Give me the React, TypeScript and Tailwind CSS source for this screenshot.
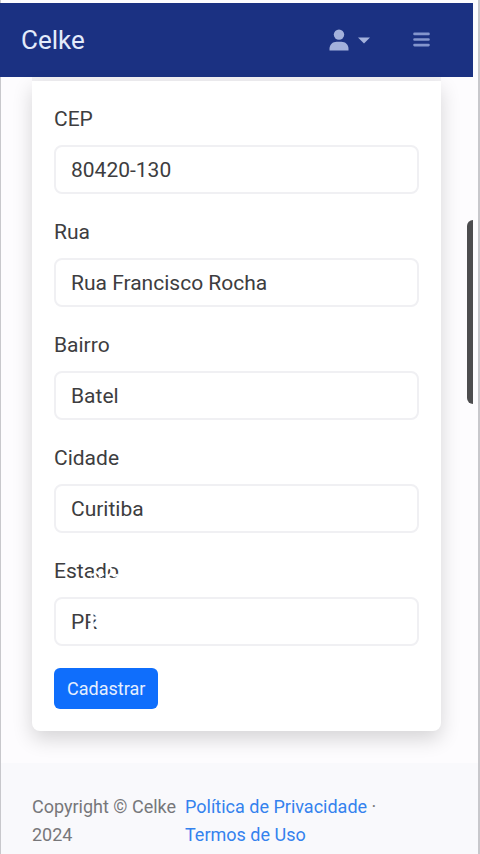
import { ReactNode } from "react";

type Field = {
  id: string;
  label: string;
  value: string;
  labelMark?: ReactNode;
  inputMark?: ReactNode;
};

const fields: Field[] = [
  { id: "cep", label: "CEP", value: "80420-130" },
  { id: "rua", label: "Rua", value: "Rua Francisco Rocha" },
  { id: "bairro", label: "Bairro", value: "Batel" },
  { id: "cidade", label: "Cidade", value: "Curitiba" },
  {
    id: "estado",
    label: "Estado",
    value: "PR",
    labelMark: (
      <svg viewBox="0 0 30 24" className="absolute left-9 top-1 h-6 w-[30px]" fill="none" stroke="#fff" strokeWidth="2.4" aria-hidden="true">
        <path d="M0 17l4-2M5 12l7 5M9 18l5-3M17 18l5-4M19 8l4 4M23 17l5-1" />
      </svg>
    ),
    inputMark: (
      <svg viewBox="0 0 16 22" className="absolute left-9 top-[14px] h-[22px] w-4" fill="none" stroke="#fff" strokeWidth="3" aria-hidden="true">
        <path d="M2 1v20M1 7h12M1 14h12" />
      </svg>
    ),
  },
];

const Header = () => {
  return (
    <header className="flex h-[74px] items-center bg-[#1b3182] pl-[21px] pr-[43px]">
      <a href="#" className="text-[26px] leading-8 text-[#e3ebfb]">
        Celke
      </a>
      <button type="button" aria-label="Usuário" className="ml-auto flex items-center gap-[9px] text-[#a3b1dc]">
        <svg viewBox="0 0 20 22" className="h-[22px] w-5" fill="currentColor" aria-hidden="true">
          <circle cx="10" cy="5.6" r="5.2" />
          <path d="M.5 21.500v-1.800c0-4.200 3.200-7 7.200-7h4.600c4 0 7.200 2.800 7.200 7v1.800z" />
        </svg>
        <svg viewBox="0 0 12 7" className="h-[7px] w-3" fill="currentColor" aria-hidden="true">
          <path d="M0 .5h12L6 6.500z" />
        </svg>
      </button>
      <button type="button" aria-label="Menu" className="ml-[43px] text-[#8495cd]">
        <svg viewBox="0 0 17 16" className="h-4 w-[17px]" stroke="currentColor" strokeWidth="2.6" strokeLinecap="round" aria-hidden="true">
          <path d="M1.500 1.900h14M1.500 7.500h14M1.500 13.100h14" />
        </svg>
      </button>
    </header>
  );
};

const FormField = ({ id, label, value, labelMark, inputMark }: Field) => {
  return (
    <div className="mb-[22px]">
      <label htmlFor={id} className="relative mb-[10px] block text-[21px] leading-8">
        {label}
        {labelMark}
      </label>
      <div className="relative">
        <input
          id={id}
          type="text"
          defaultValue={value}
          className="block h-[49px] w-full rounded-lg border-2 border-[#f0f0f3] bg-white px-[15px] text-[21px] outline-none"
        />
        {inputMark}
      </div>
    </div>
  );
};

const Footer = () => {
  return (
    <footer className="mt-8 flex grow gap-[5px] bg-[#f9f9fc] pl-[31px] pr-[60px] pt-[30px] text-[18px] leading-7 text-[#77777a]">
      <p className="w-[148px] shrink-0">Copyright © Celke 2024</p>
      <p className="flex-1">
        <a href="#" className="text-[#3482ee]">
          Política de Privacidade
        </a>{" "}
        ·{" "}
        <a href="#" className="text-[#3482ee]">
          Termos de Uso
        </a>
      </p>
    </footer>
  );
};

const App = () => {
  return (
    <div className="relative flex min-h-screen flex-col border-l border-r-2 border-[#c8c8cc] bg-[#fdfcfe] pt-[3px] font-[Roboto,sans-serif] text-[#3d3d40]">
      <div className="-ml-px mr-[5px]">
        <Header />
      </div>
      <main className="mr-[5px] pl-[31px] pr-8">
        <div className="h-1 bg-[#f2f1f4]" />
        <form className="rounded-b-lg bg-white p-[22px] shadow-[0_8px_20px_rgba(0,0,0,0.16)]">
          {fields.map((field) => (
            <FormField key={field.id} {...field} />
          ))}
          <button type="button" className="block h-[41px] rounded-md bg-[#0f6efc] px-[13px] text-[18px] text-[#e5efff]">
            Cadastrar
          </button>
        </form>
      </main>
      <Footer />
      <div className="absolute right-[5px] top-[220px] h-[184px] w-[6px] rounded-l-md bg-[#4d4d4f]" />
    </div>
  );
};

export default App;
